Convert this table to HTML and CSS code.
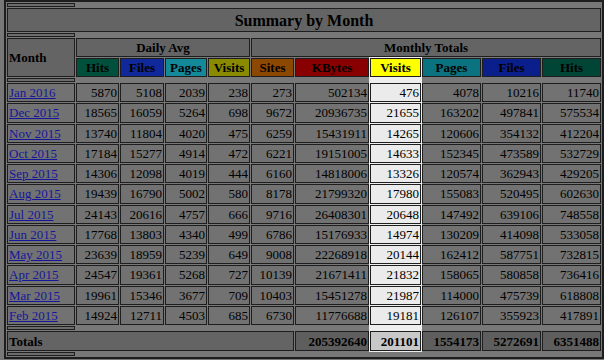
FILE: index.html
```html
<!DOCTYPE html>
<html>
<head>
<meta charset="utf-8">
<title>Summary by Month</title>
<link rel="stylesheet" href="styles.css">
</head>
<body>
<table class="summary">
  <colgroup>
    <col class="w-month"><col class="w-43"><col class="w-44"><col class="w-42"><col class="w-42"><col class="w-43">
    <col class="w-74"><col class="w-51"><col class="w-59"><col class="w-59"><col class="w-59">
  </colgroup>
  <tr class="sep"><th></th></tr>
  <tr class="title-row"><th colspan="11" class="title">Summary by Month</th></tr>
  <tr class="sep"><th></th></tr>
  <tr class="group-row">
    <th rowspan="2" class="month-h">Month</th>
    <th colspan="4" class="grp">Daily Avg</th>
    <th colspan="6" class="grp">Monthly Totals</th>
  </tr>
  <tr class="head-row">
    <th class="d-hits">Hits</th><th class="d-files">Files</th><th class="d-pages">Pages</th><th class="d-visits">Visits</th>
    <th class="m-sites">Sites</th><th class="m-kbytes">KBytes</th><th class="m-visits vis-top">Visits</th><th class="m-pages">Pages</th><th class="m-files">Files</th><th class="m-hits">Hits</th>
  </tr>
  <tr class="sep"><th></th></tr>
  <tr class="row"><td class="mon"><a href="#">Jan 2016</a></td><td>5870</td><td>5108</td><td>2039</td><td>238</td><td>273</td><td>502134</td><td class="vis vis-first">476</td><td>4078</td><td>10216</td><td>11740</td></tr>
  <tr class="row"><td class="mon"><a href="#">Dec 2015</a></td><td>18565</td><td>16059</td><td>5264</td><td>698</td><td>9672</td><td>20936735</td><td class="vis">21655</td><td>163202</td><td>497841</td><td>575534</td></tr>
  <tr class="row"><td class="mon"><a href="#">Nov 2015</a></td><td>13740</td><td>11804</td><td>4020</td><td>475</td><td>6259</td><td>15431911</td><td class="vis">14265</td><td>120606</td><td>354132</td><td>412204</td></tr>
  <tr class="row"><td class="mon"><a href="#">Oct 2015</a></td><td>17184</td><td>15277</td><td>4914</td><td>472</td><td>6221</td><td>19151005</td><td class="vis">14633</td><td>152345</td><td>473589</td><td>532729</td></tr>
  <tr class="row"><td class="mon"><a href="#">Sep 2015</a></td><td>14306</td><td>12098</td><td>4019</td><td>444</td><td>6160</td><td>14818006</td><td class="vis">13326</td><td>120574</td><td>362943</td><td>429205</td></tr>
  <tr class="row"><td class="mon"><a href="#">Aug 2015</a></td><td>19439</td><td>16790</td><td>5002</td><td>580</td><td>8178</td><td>21799320</td><td class="vis">17980</td><td>155083</td><td>520495</td><td>602630</td></tr>
  <tr class="row"><td class="mon"><a href="#">Jul 2015</a></td><td>24143</td><td>20616</td><td>4757</td><td>666</td><td>9716</td><td>26408301</td><td class="vis">20648</td><td>147492</td><td>639106</td><td>748558</td></tr>
  <tr class="row"><td class="mon"><a href="#">Jun 2015</a></td><td>17768</td><td>13803</td><td>4340</td><td>499</td><td>6786</td><td>15176933</td><td class="vis">14974</td><td>130209</td><td>414098</td><td>533058</td></tr>
  <tr class="row"><td class="mon"><a href="#">May 2015</a></td><td>23639</td><td>18959</td><td>5239</td><td>649</td><td>9008</td><td>22268918</td><td class="vis">20144</td><td>162412</td><td>587751</td><td>732815</td></tr>
  <tr class="row"><td class="mon"><a href="#">Apr 2015</a></td><td>24547</td><td>19361</td><td>5268</td><td>727</td><td>10139</td><td>21671411</td><td class="vis">21832</td><td>158065</td><td>580858</td><td>736416</td></tr>
  <tr class="row"><td class="mon"><a href="#">Mar 2015</a></td><td>19961</td><td>15346</td><td>3677</td><td>709</td><td>10403</td><td>15451278</td><td class="vis">21987</td><td>114000</td><td>475739</td><td>618808</td></tr>
  <tr class="row"><td class="mon"><a href="#">Feb 2015</a></td><td>14924</td><td>12711</td><td>4503</td><td>685</td><td>6730</td><td>11776688</td><td class="vis vis-last">19181</td><td>126107</td><td>355923</td><td>417891</td></tr>
  <tr class="sep"><th></th></tr>
  <tr class="tot-row">
    <th colspan="6" class="tot-label">Totals</th>
    <th class="tot">205392640</th><th class="tot tot-vis">201101</th><th class="tot">1554173</th><th class="tot">5272691</th><th class="tot">6351488</th>
  </tr>
  <tr class="sep"><th></th></tr>
</table>
</body>
</html>
```

FILE: styles.css
```css
html, body {
  margin: 0;
  padding: 0;
  background: #787878;
}

body {
  font-family: "Liberation Serif", "Times New Roman", serif;
  font-size: 13px;
  color: #000;
}

.summary {
  table-layout: fixed;
  width: 600px;
  margin: 0 0 0 4px;
  border: 2px solid #1e1e1e;
  border-spacing: 1px;
  background: #787878;
}

.w-month { width: 68px; }
.w-42 { width: 42px; }
.w-43 { width: 43px; }
.w-44 { width: 44px; }
.w-51 { width: 51px; }
.w-59 { width: 59px; }
.w-74 { width: 74px; }

.summary th,
.summary td {
  border: 1px solid #1e1e1e;
  padding: 0 1px;
  line-height: 15px;
  white-space: nowrap;
  overflow: hidden;
}

.summary th {
  background: #646464;
  font-weight: bold;
  text-align: center;
}

.sep { height: 4px; }
.sep th { padding: 0; line-height: 0; background: #6c6c6c; }

.title-row { height: 24px; }
.title { font-size: 16px; line-height: 18px; }

.group-row { height: 19px; }
.head-row { height: 19px; }

.month-h { text-align: left !important; }

.d-hits { background: #00503c !important; }
.d-files { background: #10289a !important; }
.d-pages { background: #13899a !important; }
.d-visits { background: #8a8a00 !important; }
.m-sites { background: #8c4800 !important; }
.m-kbytes { background: #880000 !important; }
.m-visits { background: #ffff00 !important; }
.m-pages { background: #0a737f !important; }
.m-files { background: #0b1f8c !important; }
.m-hits { background: #004535 !important; }

.vis-top { box-shadow: 0 0 0 1px #eeeeee, 0 3px 0 1px #eeeeee; }

.row { height: 19.25px; }

.row td {
  background: #727272;
  text-align: right;
}

.row td.mon { text-align: left; }

.mon a {
  color: #16169a;
  text-decoration: underline;
}

.row td.vis {
  background: #ebebeb;
  box-shadow: 0 0 0 1px #eeeeee;
}

.row td.vis-first { box-shadow: 0 0 0 1px #eeeeee, 0 -3px 0 1px #eeeeee; }
.row td.vis-last { box-shadow: 0 0 0 1px #eeeeee, 0 3px 0 1px #eeeeee; }

.tot-row { height: 20px; }

.tot-label { text-align: left !important; background: #636363; }

.summary th.tot {
  text-align: right;
  background: #5e5e5e;
}

.summary th.tot-vis {
  background: #c8c8c8;
  box-shadow: 0 0 0 1px #eeeeee, 0 -3px 0 1px #eeeeee;
}
```
